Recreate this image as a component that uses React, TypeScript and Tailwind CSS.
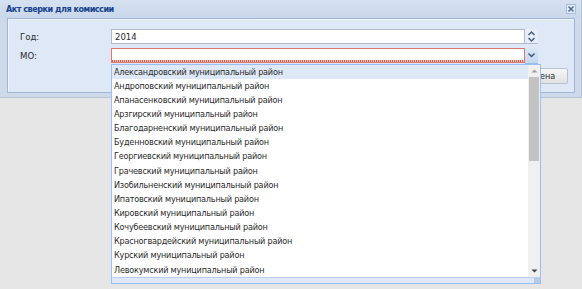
import React from "react";

const items = [
  "Александровский муниципальный район",
  "Андроповский муниципальный район",
  "Апанасенковский муниципальный район",
  "Арзгирский муниципальный район",
  "Благодарненский муниципальный район",
  "Буденновский муниципальный район",
  "Георгиевский муниципальный район",
  "Грачевский муниципальный район",
  "Изобильненский муниципальный район",
  "Ипатовский муниципальный район",
  "Кировский муниципальный район",
  "Кочубеевский муниципальный район",
  "Красногвардейский муниципальный район",
  "Курский муниципальный район",
  "Левокумский муниципальный район",
];

export default function App() {
  return (
    <div
      className="relative w-[582px] h-[289px] overflow-hidden bg-[#e6e6e6] text-[#2a2a2a]"
      style={{ fontFamily: "Tahoma, 'DejaVu Sans Condensed', 'DejaVu Sans', sans-serif" }}
    >
      {/* window */}
      <div className="w-[582px] h-[98px] bg-[#cedaea] border-r border-b border-[#b5c3d6] flex flex-col">
        <div className="h-[18px] flex items-center justify-between pl-[6px] pr-[4px] bg-gradient-to-b from-[#d6e2f1] to-[#c9d7ea]">
          <span className="text-[9px] font-bold tracking-[-0.5px] text-[#15428b] leading-none">Акт сверки для комиссии</span>
          <div className="w-[10px] h-[10px] mr-[1px] flex items-center justify-center bg-[#e4ecf7] border border-[#a8bcd8]">
            <svg width="8" height="8" viewBox="0 0 8 8">
              <path d="M1.5 1.5 L6.5 6.5 M6.5 1.5 L1.5 6.5" stroke="#4f6f9b" strokeWidth="1.6" />
            </svg>
          </div>
        </div>
        <div className="ml-[7px] mr-[6px] h-[75px] border border-[#9fb6d6] bg-[#dfe8f6] shadow-[inset_1px_1px_0_#eef3fb]">
          <div className="flex flex-col pt-[10px] pl-[12px] gap-[4px]">
            <div className="flex items-center h-[15px]">
              <span className="w-[91px] text-[9.5px] leading-none">Год:</span>
              <div className="w-[414px] h-[15px] bg-white border border-[#b5b8c8] flex items-center pl-[3px] text-[9.5px] leading-none">2014</div>
              <div className="w-[13px] h-[15px] flex flex-col items-center justify-center bg-[#e7eef8] border-b border-[#b5b8c8]">
                <svg width="9" height="13" viewBox="0 0 9 13">
                  <path d="M1.5 5 L4.5 2 L7.5 5" stroke="#4b5d7a" strokeWidth="1.5" fill="none" />
                  <path d="M1.5 8 L4.5 11 L7.5 8" stroke="#4b5d7a" strokeWidth="1.5" fill="none" />
                </svg>
              </div>
            </div>
            <div className="flex items-center h-[15px]">
              <span className="w-[91px] text-[9.5px] leading-none">МО:</span>
              <div className="relative w-[414px] h-[15px] bg-white border border-[#dd7870]">
                <div className="absolute left-0 right-0 bottom-0 h-[2px] bg-[repeating-linear-gradient(90deg,#e45b4f_0,#e45b4f_1px,#f7c8c3_1px,#f7c8c3_2px)]" />
              </div>
              <div className="w-[13px] h-[16px] flex items-center justify-center bg-gradient-to-b from-[#d9e6f7] to-[#c4d7f0] border-b border-[#99bbe8]">
                <svg width="9" height="8" viewBox="0 0 9 8">
                  <path d="M1.5 2.5 L4.5 5.5 L7.5 2.5" stroke="#3e5576" strokeWidth="1.5" fill="none" />
                </svg>
              </div>
            </div>
          </div>
          <div className="flex justify-end pr-[6px] mt-[5px]">
            <div className="w-[58px] h-[16px] border border-[#b8c2ce] rounded-[2px] bg-gradient-to-b from-[#f7f7f7] to-[#e2e2e2] flex items-center justify-center text-[9px] leading-none">
              Отмена
            </div>
          </div>
        </div>
      </div>

      {/* dropdown list */}
      <div className="absolute left-[111px] top-[64px] w-[430px] h-[220px] bg-white border border-[#98c0f4] flex flex-col">
        <div className="flex flex-1 min-h-0">
          <div className="flex-1 flex flex-col">
            {items.map((t, i) => (
              <div
                key={t}
                className={
                  "h-[14.2px] flex items-center pl-[2px] text-[9px] tracking-[-0.2px] leading-none whitespace-nowrap " +
                  (i === 0 ? "bg-[#dfe8f6]" : "")
                }
              >
                {t}
              </div>
            ))}
          </div>
          <div className="w-[12px] bg-[#f0f0f0] flex flex-col items-center">
            <div className="h-[12px] flex items-center justify-center">
              <svg width="7" height="4" viewBox="0 0 7 4">
                <path d="M0.5 3.5 L3.5 0.5 L6.5 3.5 Z" fill="#a0a0a0" />
              </svg>
            </div>
            <div className="w-[10px] h-[84px] bg-[#c3c3c3]" />
            <div className="flex-1" />
            <div className="h-[12px] flex items-center justify-center">
              <svg width="7" height="4" viewBox="0 0 7 4">
                <path d="M0.5 0.5 L6.5 0.5 L3.5 3.5 Z" fill="#404040" />
              </svg>
            </div>
          </div>
        </div>
        <div className="h-[6px] bg-[#dfe8f6] border-t border-[#b8cfee] flex justify-end">
          <div className="w-[6px] h-[5px] bg-[radial-gradient(#8aa8d0_0.6px,transparent_0.8px)] bg-[length:2px_2px]" />
        </div>
      </div>
    </div>
  );
}
